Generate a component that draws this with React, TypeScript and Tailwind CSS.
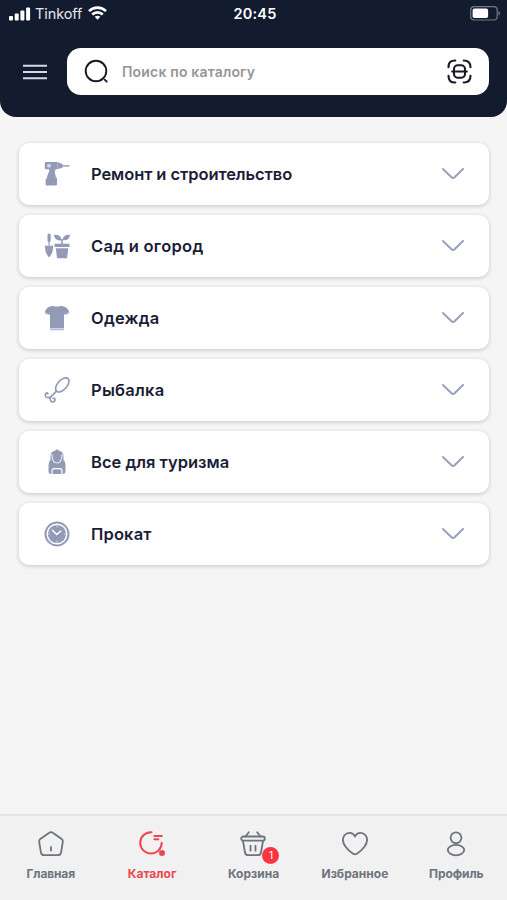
import React from "react";

type IconProps = { className?: string };

const DrillIcon = () => (
  <svg width="26" height="26" viewBox="0 0 26 26" fill="#929ab7">
    <path d="M2.200 1H13l5.500 2.100v3.600L13 8.200h-1.200c-1.200 1.600-1.200 3-.6 4.700l.7 3.600c.8.3 1.100.8 1.100 1.600v4.900c0 1-.6 1.500-1.500 1.500H3c-1 0-1.400-.6-1.400-1.500V19c0-1 .5-1.500 1.300-1.800C3.400 13 5.600 11 5.200 8.200h-3C1.300 8.200.8 7.500.8 6.700V2.400C.8 1.500 1.300 1 2.200 1Z" />
    <path d="M18 4.200h7.500v1.400H18z" />
    <rect x="3.200" y="3" width="3.600" height="3.600" rx="1" fill="#d2d7e5" />
    <path d="M13.500 2v5.500" stroke="#b9c0d2" strokeWidth=".7" />
  </svg>
);

const GardenIcon = () => (
  <svg width="26" height="26" viewBox="0 0 26 26" fill="#929ab7">
    <rect x="3.500" y=".5" width="3.200" height="8.500" rx="1.500" />
    <path d="M4.500 8h1.200v5.300c1.200 0 1.700-1 3.200-1 .5 5-.8 9-3.800 12.200C2.100 21.400.700 17.300 1.200 12.300c1.500 0 2 1 3.300 1Z" />
    <path d="M9.800 1.900c4.600-.6 7.100 1.100 7.900 5.300-4 .8-6.900-.9-7.900-5.300ZM26 1.700c-.5 4.200-3.200 6.200-7.700 5.500.5-4 3.200-5.900 7.700-5.500Z" />
    <path d="M17.200 6h1.600v5h-1.600zM10.500 10.700h15V14h-15zM11.800 15.300h12.500L23 25.300H13Z" />
  </svg>
);

const ShirtIcon = () => (
  <svg width="26" height="26" viewBox="0 0 26 26" fill="#929ab7">
    <path d="M9 .8c2 1.200 6 1.200 8 0l4.300 1.300c2 .7 3.300 3.500 4.100 6l-4.100 2-1.300-1.200V23H6V8.900l-1.300 1.200-4.100-2c.8-2.500 2.100-5.300 4.100-6Z" />
    <path d="M6 23.300h14v2H6z" fill="#b9c0d2" />
    <path d="m.800 7.300 4 2M25.200 7.300l-4 2" stroke="#c3c9d8" strokeWidth=".8" />
  </svg>
);

const LureIcon = () => (
  <svg
    width="26"
    height="26"
    viewBox="0 0 26 26"
    fill="none"
    stroke="#929ab7"
    strokeWidth="1.700"
    strokeLinecap="round"
    strokeLinejoin="round"
  >
    <ellipse cx="18.300" cy="7.900" rx="4.700" ry="8.500" transform="rotate(42 18.300 7.900)" />
    <path d="m12.500 14.200-5.800 5.600" />
    <path d="M2.800 15.700c-2.200 1-2 4.300.4 4.800 1.500.3 2.700-.1 3.500-.7-.8 1.500-.9 4.200 1.200 5 2.400.7 3.800-1.500 2.700-3.500M2.800 15.700l1.200 1.100M10.600 21.300l-1.500.1" />
  </svg>
);

const BackpackIcon = () => (
  <svg width="26" height="26" viewBox="0 0 26 26" fill="#929ab7">
    <path d="M11.300 1.800C11.300 0 14.700 0 14.700 1.800 18.500 2.200 19.500 4.500 19.500 8v3c1 .5 2 3 2 6v5c0 2-.8 3-2.600 3H7.100c-1.800 0-2.600-1-2.600-3v-5c0-3 1-5.500 2-6V8c0-3.500 1-5.800 4.800-6.200Z" />
    <path d="M7.800 5c.2 5.200 1.700 9 5.200 9s5-3.800 5.200-9" fill="none" stroke="#e6e9f1" strokeWidth="1.200" />
    <path d="M8 25v-3c0-1.500.8-2.300 2.300-2.300h5.400c1.500 0 2.300.8 2.300 2.300v3" fill="none" stroke="#fff" strokeWidth="1.200" />
  </svg>
);

const ClockIcon = () => (
  <svg width="26" height="26" viewBox="0 0 26 26" fill="none">
    <circle cx="13" cy="13" r="11.500" stroke="#929ab7" strokeWidth="2" />
    <circle cx="13" cy="13" r="9.100" fill="#929ab7" />
    <path d="m8.300 9.300 4.500 4.200 4-3.500" stroke="#fff" strokeWidth="1.500" strokeLinecap="round" />
    <path d="M13 4.500v1.700M13 19.800v1.700M4.500 13h1.700M19.800 13h1.700" stroke="#dfe3ed" />
  </svg>
);

const Chevron = () => (
  <svg width="24" height="14" viewBox="0 0 24 14" fill="none">
    <path
      d="m2 2 8.500 8.300c1 .9 2 .9 3 0L22 2"
      stroke="#98a1bd"
      strokeWidth="2"
      strokeLinecap="round"
    />
  </svg>
);

const HomeIcon = ({ className }: IconProps) => (
  <svg className={className} width="26" height="26" viewBox="0 0 26 26" fill="none" stroke="currentColor" strokeWidth="1.800" strokeLinecap="round">
    <path d="m10.900 1.900-8.300 5.800C1.500 8.500 1 9.600 1.200 10.800l1.700 10.500c.3 2 1.300 2.900 3.300 2.900h13.600c2 0 3-.9 3.300-2.900l1.700-10.500c.2-1.200-.3-2.300-1.400-3.100l-8.300-5.800c-1.400-1-2.800-1-4.200 0ZM13 16v3.500" />
  </svg>
);

const CatalogIcon = ({ className }: IconProps) => (
  <svg className={className} width="26" height="26" viewBox="0 0 26 26" fill="none" stroke="currentColor" strokeWidth="2" strokeLinecap="round">
    <path d="M12.500 1.200C6 1 1.200 6 1.200 11.800c0 6 4.800 10.700 10.800 10.700s10.700-4.800 10.700-10.700" />
    <path d="M15.300 5h7.500M15.300 8.300h4" />
    <circle cx="23" cy="22" r="2" fill="currentColor" />
  </svg>
);

const BasketIcon = ({ className }: IconProps) => (
  <svg className={className} width="26" height="26" viewBox="0 0 26 26" fill="none" stroke="currentColor" strokeWidth="1.800" strokeLinecap="round" strokeLinejoin="round">
    <path d="M8.800 1.200 5.500 5.500M17.200 1.200l3.300 4.300" />
    <rect x="1.200" y="5.500" width="23.600" height="4.200" rx="2" />
    <path d="m3 10 2 11.500c.3 1.900 1.200 2.700 3.200 2.700h9.600c2 0 2.900-.8 3.200-2.700L23 10M10.500 14.700v5M15.500 14.700v5" />
  </svg>
);

const HeartIcon = ({ className }: IconProps) => (
  <svg className={className} width="26" height="26" viewBox="0 0 26 26" fill="none" stroke="currentColor" strokeWidth="1.800">
    <path d="M13 5.200C10.500.8 5 1.100 2.500 4.300 0 7.600 1.100 12.300 3.600 15.800c2.100 3 4.800 5.200 7.500 7 1.400.9 2.400.9 3.800 0 2.700-1.800 5.400-4 7.500-7 2.500-3.500 3.600-8.200 1.100-11.500C21 1.100 15.500.8 13 5.200Z" />
  </svg>
);

const ProfileIcon = ({ className }: IconProps) => (
  <svg className={className} width="26" height="26" viewBox="0 0 26 26" fill="none" stroke="currentColor" strokeWidth="1.800">
    <circle cx="13" cy="6.700" r="5.400" />
    <ellipse cx="13" cy="19.100" rx="8.200" ry="5.200" />
  </svg>
);

const categories = [
  { name: "Ремонт и строительство", Icon: DrillIcon, tracking: "tracking-[-0.08px]" },
  { name: "Сад и огород", Icon: GardenIcon, tracking: "tracking-[0.28px]" },
  { name: "Одежда", Icon: ShirtIcon, tracking: "tracking-[0.2px]" },
  { name: "Рыбалка", Icon: LureIcon, tracking: "tracking-[0.25px]" },
  { name: "Все для туризма", Icon: BackpackIcon, tracking: "tracking-[0px]" },
  { name: "Прокат", Icon: ClockIcon, tracking: "tracking-[0.15px]" },
];

const tabs = [
  { name: "Главная", Icon: HomeIcon, tracking: "tracking-[-0.15px]" },
  { name: "Каталог", Icon: CatalogIcon, active: true, tracking: "tracking-[0px]" },
  { name: "Корзина", Icon: BasketIcon, badge: 1, tracking: "tracking-[0px]" },
  { name: "Избранное", Icon: HeartIcon, tracking: "tracking-[0px]" },
  { name: "Профиль", Icon: ProfileIcon, tracking: "tracking-[-0.1px]" },
];

function StatusBar() {
  return (
    <div className="grid h-7 grid-cols-3 items-center pl-[9px] pr-[6px] text-white">
      <div className="flex items-center">
        <svg width="22" height="14" viewBox="0 0 22 14" fill="currentColor">
          <rect x="0" y="9" width="4" height="4.500" rx="1" />
          <rect x="5.700" y="6.500" width="4" height="7" rx="1" />
          <rect x="11.400" y="3.500" width="4" height="10" rx="1" />
          <rect x="17.100" y=".5" width="4" height="13" rx="1" />
        </svg>
        <span className="ml-1 text-[14.5px] tracking-[-0.1px] text-gray-200">Tinkoff</span>
        <svg className="ml-[6px] -mt-0.5" width="19" height="14" viewBox="0 0 19 14" fill="none" stroke="currentColor" strokeWidth="2.600">
          <path d="M1 5.100C5.700.5 13.300.5 18 5.100M4.200 8.500c3-2.900 7.600-2.900 10.600 0" />
          <path d="M6.700 10.800c1.700-1.400 3.900-1.400 5.600 0L9.500 13.700Z" fill="currentColor" stroke="none" />
        </svg>
      </div>
      <span className="text-center text-[14.5px] font-semibold tracking-[0.2px]">20:45</span>
      <svg className="-mt-px justify-self-end" width="31" height="15" viewBox="0 0 31 15" fill="none">
        <rect x=".7" y=".7" width="26.500" height="13.300" rx="3.500" stroke="#727887" strokeWidth="1.200" />
        <rect x="2.600" y="2.600" width="15.500" height="9.500" rx="1.800" fill="white" />
        <path d="M28.500 5c2 .7 2 4 0 4.700Z" fill="#727887" />
      </svg>
    </div>
  );
}

function SearchBar() {
  return (
    <div className="mt-5 flex items-center pl-[23px] pr-[18px]">
      <svg width="24" height="16" viewBox="0 0 24 16" stroke="#d5dae4" strokeWidth="2">
        <path d="M0 1.700h24M0 8h24M0 14.300h24" />
      </svg>
      <div className="ml-5 flex h-[47px] flex-1 items-center rounded-[14px] bg-white pl-[17px] pr-[17px]">
        <svg width="25" height="25" viewBox="0 0 25 25" fill="none" stroke="#181a20" strokeWidth="1.900" strokeLinecap="round">
          <circle cx="12" cy="12" r="10.300" />
          <path d="m20.700 20.700 2 2" />
        </svg>
        <span className="ml-[13px] flex-1 text-[14px] font-semibold tracking-[0.18px] text-[#94969a]">
          Поиск по каталогу
        </span>
        <svg width="25" height="25" viewBox="0 0 25 25" fill="none" stroke="#181a20" strokeWidth="2.100" strokeLinecap="round">
          <path d="M1.500 8.300C1.500 3.500 3.500 1.500 8.300 1.500M16.700 1.500c4.800 0 6.800 2 6.800 6.800M23.500 16.700c0 4.800-2 6.800-6.800 6.800M8.300 23.500c-4.800 0-6.800-2-6.800-6.800" />
          <rect x="7" y="6.300" width="11" height="12.400" rx="3.700" />
          <path d="M5.200 12.500h14.600" />
        </svg>
      </div>
    </div>
  );
}

export default function App() {
  return (
    <div className="flex h-[900px] w-[507px] flex-col overflow-hidden bg-[#f5f5f5] font-[Inter,'Noto_Sans',sans-serif]">
      <header className="h-[117px] rounded-b-[16px] bg-[#131b2f]">
        <StatusBar />
        <SearchBar />
      </header>

      <main className="flex flex-1 flex-col gap-[10px] pl-[19px] pr-[18px] pt-[26px]">
        {categories.map(({ name, Icon, tracking }) => (
          <button
            key={name}
            className="flex h-[62px] items-center rounded-[10px] bg-white pl-[25px] pr-6 shadow-[0_1px_4px_rgba(0,0,0,0.2)]"
          >
            <Icon />
            <span className={`ml-[21px] flex-1 text-left text-[16.5px] font-semibold text-[#1b1d37] ${tracking}`}>
              {name}
            </span>
            <Chevron />
          </button>
        ))}
      </main>

      {/* Bottom tabs */}
      <nav className="grid h-[86px] grid-cols-5 border-t-2 border-[#e5e5e5] bg-[#f1f1f1]">
        {tabs.map(({ name, Icon, active, badge, tracking }) => (
          <div
            key={name}
            className={`flex flex-col items-center pt-[15px] ${active ? "text-[#ee4650]" : "text-[#6d747d]"}`}
          >
            <div className="relative">
              <Icon />
              {badge && (
                <span className="absolute -right-[13px] top-4 flex size-[17px] items-center justify-center rounded-full bg-[#fa3440] text-[10px] text-white">
                  {badge}
                </span>
              )}
            </div>
            <span className={`mt-[9px] text-[12px] leading-4 font-bold ${tracking}`}>{name}</span>
          </div>
        ))}
      </nav>
    </div>
  );
}
